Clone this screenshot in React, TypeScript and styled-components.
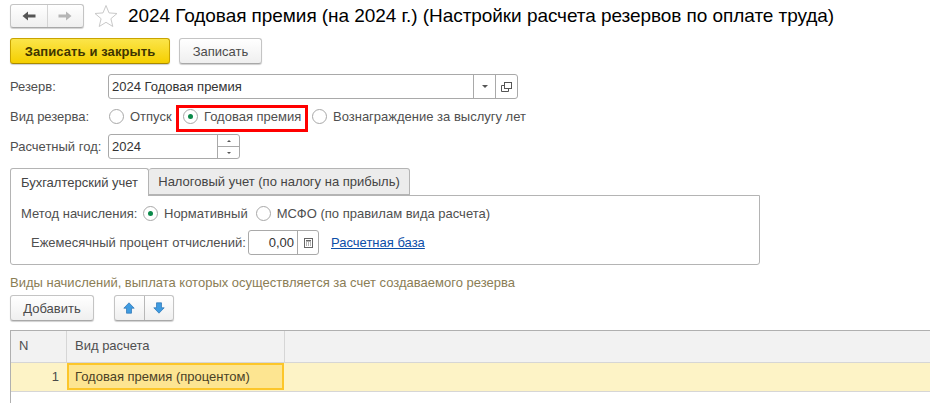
import React from "react";
import styled, { createGlobalStyle } from "styled-components";

const Global = createGlobalStyle`
  html, body { margin: 0; padding: 0; background: #fff; overflow: hidden; }
  body { font-family: "Liberation Sans", Arial, sans-serif; font-size: 13px; color: #4b4b4b; }
  #root { width: 930px; height: 403px; overflow: hidden; }
`;

const Page = styled.div`
  width: 930px; height: 403px; display: flex; flex-direction: column; padding: 4px 0 0 10px; box-sizing: border-box;
`;
const TitleBar = styled.div`display: flex; align-items: center; height: 24px;`;
const NavGroup = styled.div`
  display: flex; width: 74px; height: 24px; box-sizing: border-box; border: 1px solid #c4c4c4; border-bottom-color: #a8a8a8; border-radius: 3px;
  background: linear-gradient(#fff, #efefef); box-shadow: 0 1px 1px #d0d0d0;
`;
const NavCell = styled.div<{ $last?: boolean }>`
  flex: 1; display: flex; align-items: center; justify-content: center; border-left: ${p => (p.$last ? "1px solid #d4d4d4" : "none")};
`;
const StarWrap = styled.div`margin-left: 10px; width: 24px; height: 24px;`;
const Title = styled.div`margin-left: 10px; font-size: 19px; color: #000; white-space: nowrap; line-height: 24px; letter-spacing: -0.06px;`;

const Actions = styled.div`display: flex; gap: 9px; margin-top: 10px;`;
const Btn = styled.div<{ $w: number; $primary?: boolean }>`
  width: ${p => p.$w}px; height: 26px; box-sizing: border-box; display: flex; align-items: center; justify-content: center;
  border: 1px solid ${p => (p.$primary ? "#c9a400" : "#c4c4c4")}; border-bottom-color: ${p => (p.$primary ? "#a98a00" : "#a8a8a8")}; border-radius: 3px;
  background: ${p => (p.$primary ? "linear-gradient(#fbe54a, #f5cf00)" : "linear-gradient(#fff, #efefef)")};
  color: ${p => (p.$primary ? "#3f3500" : "#4b4b4b")}; font-weight: ${p => (p.$primary ? 700 : 400)}; font-size: 13px;
  box-shadow: 0 1px 1px #d0d0d0; letter-spacing: ${p => (p.$primary ? "0.1px" : "0")};
`;

const Row = styled.div<{ $top: number }>`
  display: flex; align-items: center; margin-top: ${p => p.$top}px; height: 25px;
`;
const Label = styled.div<{ $w: number }>`width: ${p => p.$w}px; flex: none; white-space: nowrap; color: #4f4f4f;`;
const Field = styled.div<{ $w: number }>`
  width: ${p => p.$w}px; height: 25px; box-sizing: border-box; border: 1px solid #a9a9a9; border-radius: 3px; display: flex; align-items: stretch; background: #fff; flex: none;
`;
const FieldText = styled.div<{ $right?: boolean }>`
  flex: 1; padding: 0 3px; line-height: 23px; color: #333; text-align: ${p => (p.$right ? "right" : "left")};
`;
const FieldBtn = styled.div<{ $w: number }>`
  width: ${p => p.$w}px; flex: none; border-left: 1px solid #a9a9a9; display: flex; align-items: center; justify-content: center;
`;
const Spin = styled.div`
  width: 21px; flex: none; border-left: 1px solid #a9a9a9; display: flex; flex-direction: column;
`;
const SpinCell = styled.div<{ $top?: boolean }>`
  flex: 1; display: flex; align-items: center; justify-content: center; border-top: ${p => (p.$top ? "none" : "1px solid #a9a9a9")};
`;
const Caret = styled.div<{ $up?: boolean; $s?: number }>`
  width: 0; height: 0; border-left: ${p => p.$s ?? 2}px solid transparent; border-right: ${p => p.$s ?? 2}px solid transparent;
  ${p => (p.$up ? `border-bottom: 2px solid #555;` : `border-top: ${p.$s === 3 ? 3 : 2}px solid #555;`)}
`;
const RadioGroup = styled.div<{ $ml?: number; $w?: number }>`
  display: flex; align-items: center; gap: 6px; flex: none; margin-left: ${p => p.$ml ?? 0}px; white-space: nowrap; color: #4f4f4f;
  ${p => (p.$w ? `width: ${p.$w}px;` : "")}
`;
const RadioCircle = styled.span<{ $on?: boolean }>`
  width: 15px; height: 15px; box-sizing: border-box; border-radius: 50%; border: 1px solid #a8a8a8; background: #fff; flex: none; display: flex; align-items: center; justify-content: center;
  &::after { content: ""; width: 5px; height: 5px; border-radius: 50%; background: ${p => (p.$on ? "#0b8a4a" : "transparent")}; }
`;
const HighlightedRadio = styled(RadioGroup)`
  position: relative;
  &::before {
    content: ""; position: absolute; left: -7px; top: calc(50% - 12px); width: 132px; height: 27px; box-sizing: border-box; border: 3px solid #f00; pointer-events: none;
  }
`;

const Tabs = styled.div`display: flex; margin-top: 9px; height: 27px; position: relative; z-index: 1;`;
const Tab = styled.div<{ $w: number; $active?: boolean }>`
  width: ${p => p.$w}px; height: ${p => (p.$active ? 28 : 27)}px; box-sizing: border-box; border: 1px solid #b4b4b4; border-left-width: ${p => (p.$active ? 1 : 0)}px;
  border-bottom: ${p => (p.$active ? "none" : "1px solid #b4b4b4")}; border-radius: 3px 3px 0 0; background: ${p => (p.$active ? "#fff" : "#ececec")};
  display: flex; align-items: center; justify-content: center; color: #444;
`;
const Panel = styled.div`
  width: 750px; height: 70px; box-sizing: border-box; border: 1px solid #b4b4b4; border-radius: 0 0 3px 3px; padding: 0 0 0 10px;
`;
const PanelRow = styled.div<{ $top: number; $pl?: number }>`
  display: flex; align-items: center; height: 25px; margin-top: ${p => p.$top}px; padding-left: ${p => p.$pl ?? 0}px; white-space: nowrap;
`;
const LinkText = styled.a`margin-left: 12px; color: #0b4ea8; text-decoration: underline;`;
const Hint = styled.div`margin-top: 11px; height: 14px; line-height: 14px; color: #8a7d55;`;
const ToolRow = styled.div`display: flex; margin-top: 5px; gap: 20px;`;
const ArrowGroup = styled.div`
  display: flex; width: 60px; height: 26px; box-sizing: border-box; border: 1px solid #c4c4c4; border-bottom-color: #a8a8a8; border-radius: 3px;
  background: linear-gradient(#fff, #efefef); box-shadow: 0 1px 1px #d0d0d0;
`;
const ArrowCell = styled.div<{ $last?: boolean }>`
  flex: 1; display: flex; align-items: center; justify-content: center; border-left: ${p => (p.$last ? "1px solid #b8b8b8" : "none")};
`;
const Table = styled.div`
  margin-top: 9px; width: 920px; height: 73px; border-top: 1px solid #b0b0b0; border-left: 1px solid #b0b0b0; box-sizing: border-box;
`;
const HeadRow = styled.div`
  display: flex; height: 31px; background: #f2f2f2; border-bottom: 1px solid #d6d6d6;
`;
const HeadCell = styled.div<{ $w?: number }>`
  width: ${p => (p.$w ? `${p.$w}px` : "auto")}; flex: ${p => (p.$w ? "none" : 1)}; box-sizing: border-box; border-right: ${p => (p.$w ? "1px solid #d6d6d6" : "none")}; padding-left: 8px; line-height: 29px; color: #4f4f4f;
`;
const DataRow = styled.div`
  display: flex; height: 28px; background: #fdf3c6; border-bottom: 1px solid #d6d6d6;
`;
const NumCell = styled.div`
  width: 56px; flex: none; text-align: right; padding-right: 8px; box-sizing: border-box; line-height: 27px; color: #4a4a4a;
`;
const CurrentCell = styled.div`
  width: 217px; height: 27px; flex: none; box-sizing: border-box; border: 2px solid #fcc62a; background: #fde591; padding-left: 6px; line-height: 23px; color: #4a4126; white-space: nowrap;
`;

const Star = () => (
  <svg width="24" height="24" viewBox="0 0 24 24">
    <path d="M12 1.5l3 7.4 8 .6-6.1 5.2 1.9 7.8-6.8-4.2-6.8 4.2 1.9-7.8L1 9.5l8-.6z" fill="#fff" stroke="#c9c9c9" />
  </svg>
);
const NavArrow = ({ left, color }: { left?: boolean; color: string }) => (
  <svg width="14" height="12" viewBox="0 0 14 12" style={{ transform: left ? "none" : "scaleX(-1)" }}>
    <path d="M0.5 6L6 1.5v3h7.5v3H6v3z" fill={color} />
  </svg>
);
const UpDown = ({ down }: { down?: boolean }) => (
  <svg width="12" height="12" viewBox="0 0 12 12" style={{ transform: down ? "scaleY(-1)" : "none" }}>
    <path d="M6 .8l5.2 5.4H8.5v5H3.5v-5H.8z" fill="#3f9be0" stroke="#2a72b5" strokeWidth="0.7" />
  </svg>
);
const OpenIcon = () => (
  <svg width="11" height="10" viewBox="0 0 11 10" fill="none" stroke="#555">
    <rect x="3.5" y="0.5" width="7" height="6" fill="#fff" />
    <path d="M3.5 3.5h-3v6h7v-3" />
  </svg>
);
const Calc = () => (
  <svg width="9" height="10" viewBox="0 0 9 10">
    <rect x="0.5" y="0.5" width="8" height="9" fill="#fff" stroke="#666" />
    <rect x="2" y="2" width="5" height="1.5" fill="#666" />
    <path d="M2 5h1M4 5h1M6 5h1M2 7h1M4 7h1M6 7h1" stroke="#666" />
  </svg>
);

export default function App() {
  return (
    <Page>
      <Global />
      <TitleBar>
        <NavGroup>
          <NavCell><NavArrow left color="#555" /></NavCell>
          <NavCell $last><NavArrow color="#b5b5b5" /></NavCell>
        </NavGroup>
        <StarWrap><Star /></StarWrap>
        <Title>2024 Годовая премия (на 2024 г.) (Настройки расчета резервов по оплате труда)</Title>
      </TitleBar>
      <Actions>
        <Btn $w={160} $primary>Записать и закрыть</Btn>
        <Btn $w={83}>Записать</Btn>
      </Actions>
      <Row $top={10}>
        <Label $w={98}>Резерв:</Label>
        <Field $w={410}>
          <FieldText>2024 Годовая премия</FieldText>
          <FieldBtn $w={21}><Caret $s={3} /></FieldBtn>
          <FieldBtn $w={21}><OpenIcon /></FieldBtn>
        </Field>
      </Row>
      <Row $top={5}>
        <Label $w={98}>Вид резерва:</Label>
        <RadioGroup $ml={1} $w={64}><RadioCircle />Отпуск</RadioGroup>
        <HighlightedRadio $ml={10} $w={129}><RadioCircle $on />Годовая премия</HighlightedRadio>
        <RadioGroup $ml={0}><RadioCircle />Вознаграждение за выслугу лет</RadioGroup>
      </Row>
      <Row $top={5}>
        <Label $w={98}>Расчетный год:</Label>
        <Field $w={132}>
          <FieldText>2024</FieldText>
          <Spin>
            <SpinCell $top><Caret $up /></SpinCell>
            <SpinCell><Caret /></SpinCell>
          </Spin>
        </Field>
      </Row>
      <Tabs>
        <Tab $w={139} $active>Бухгалтерский учет</Tab>
        <Tab $w={261}>Налоговый учет (по налогу на прибыль)</Tab>
      </Tabs>
      <Panel>
        <PanelRow $top={5}>
          <Label $w={122}>Метод начисления:</Label>
          <RadioGroup $ml={0}><RadioCircle $on />Нормативный</RadioGroup>
          <RadioGroup $ml={8}><RadioCircle />МСФО (по правилам вида расчета)</RadioGroup>
        </PanelRow>
        <PanelRow $top={4} $pl={10}>
          <Label $w={217}>Ежемесячный процент отчислений:</Label>
          <Field $w={71}>
            <FieldText $right>0,00</FieldText>
            <FieldBtn $w={20}><Calc /></FieldBtn>
          </Field>
          <LinkText>Расчетная база</LinkText>
        </PanelRow>
      </Panel>
      <Hint>Виды начислений, выплата которых осуществляется за счет создаваемого резерва</Hint>
      <ToolRow>
        <Btn $w={84}>Добавить</Btn>
        <ArrowGroup>
          <ArrowCell><UpDown /></ArrowCell>
          <ArrowCell $last><UpDown down /></ArrowCell>
        </ArrowGroup>
      </ToolRow>
      <Table>
        <HeadRow>
          <HeadCell $w={56}>N</HeadCell>
          <HeadCell $w={218}>Вид расчета</HeadCell>
          <HeadCell />
        </HeadRow>
        <DataRow>
          <NumCell>1</NumCell>
          <CurrentCell>Годовая премия (процентом)</CurrentCell>
        </DataRow>
      </Table>
    </Page>
  );
}
